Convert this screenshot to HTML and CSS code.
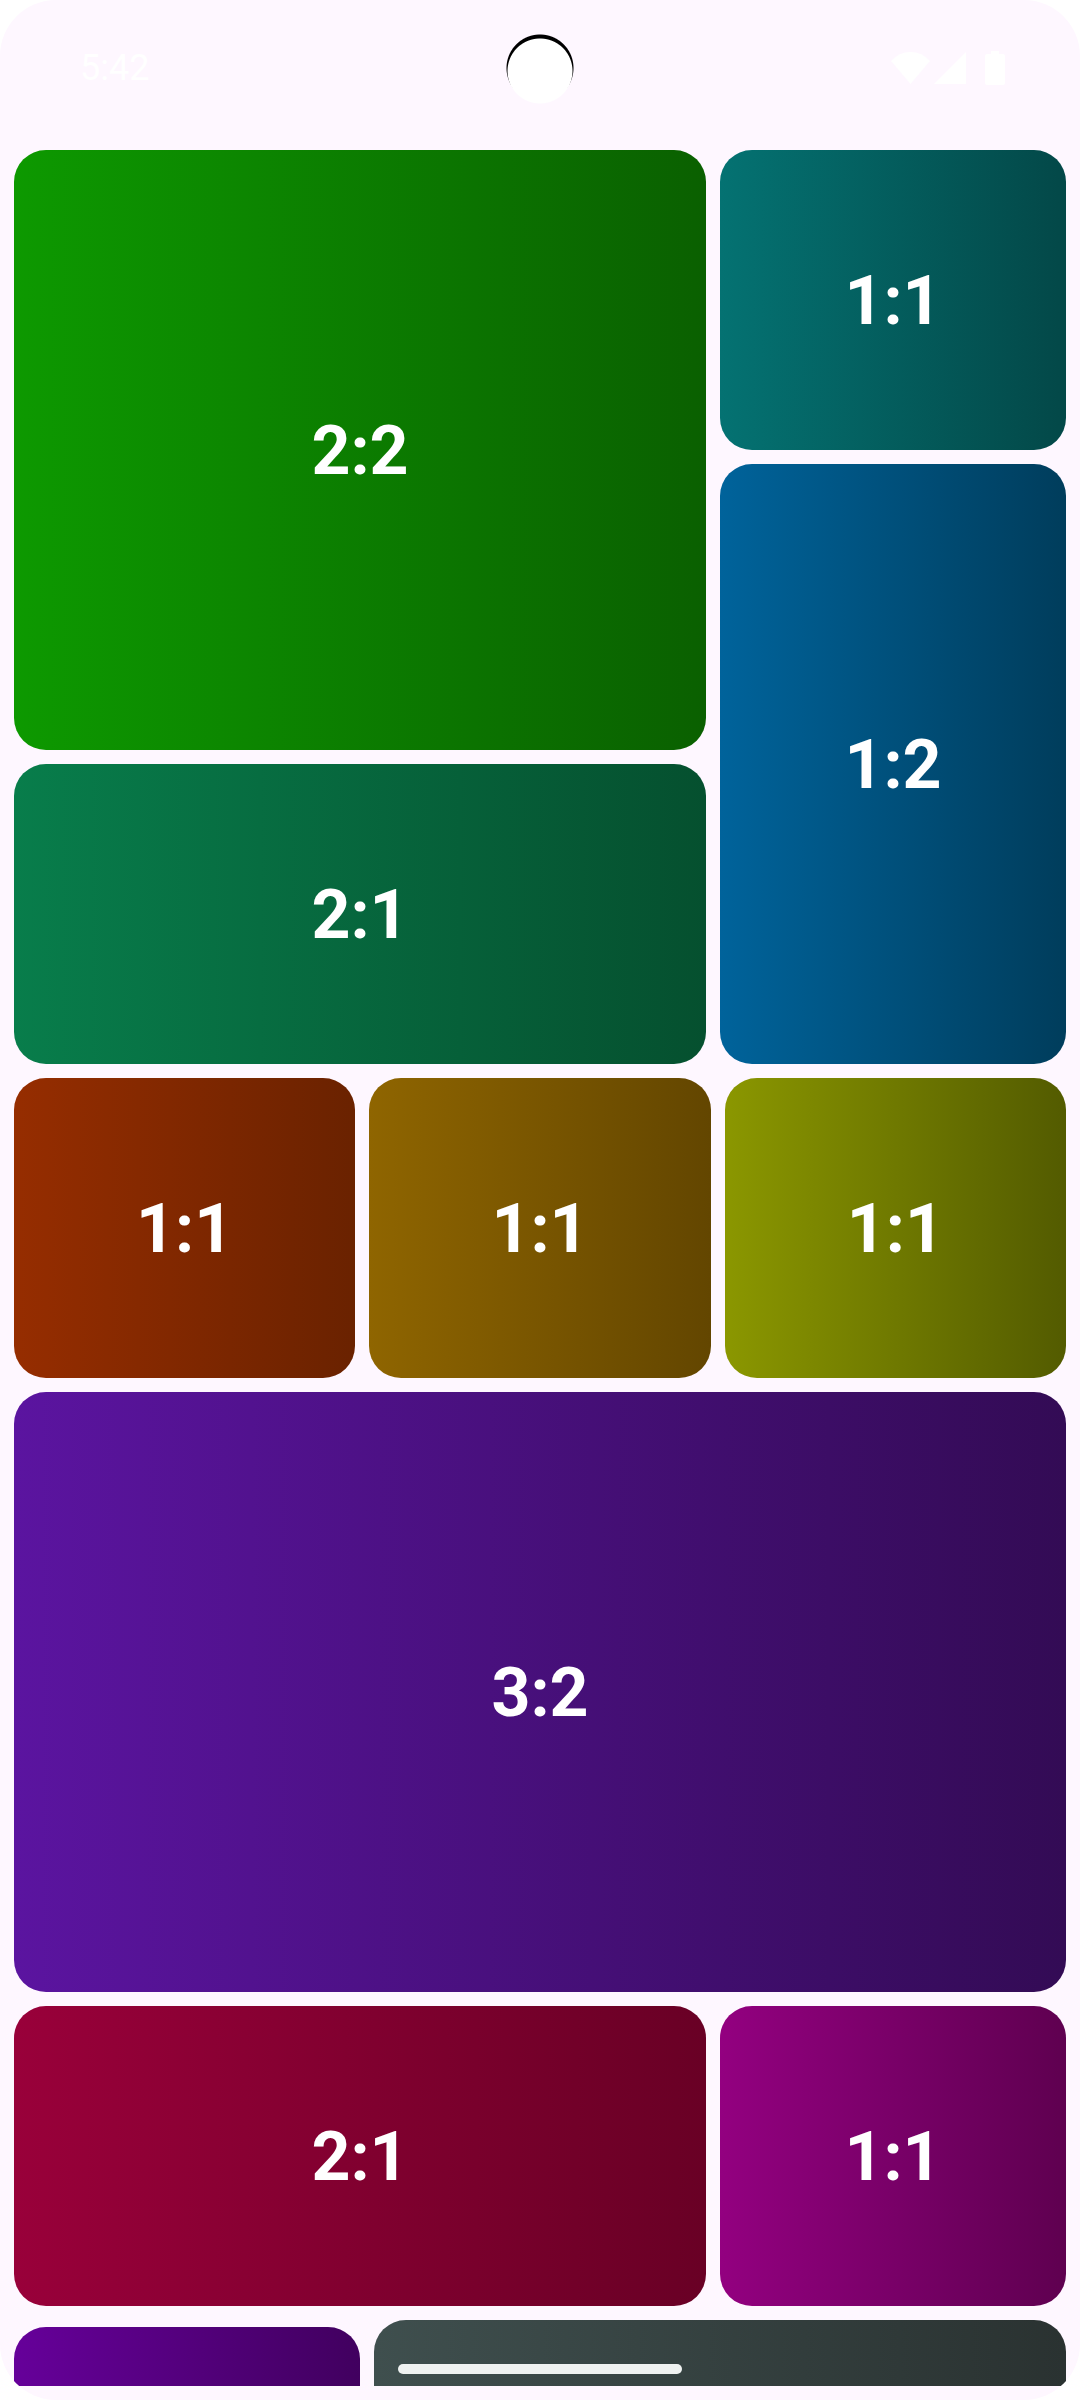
FILE: index.html
```html
<!DOCTYPE html>
<html lang="en">
<head>
<meta charset="utf-8">
<meta name="viewport" content="width=device-width, initial-scale=1">
<title>Weighted grid</title>
<link rel="stylesheet" href="styles.css">
</head>
<body>
<div class="screen">
  <header class="status">
    <time class="clock">5:42</time>
    <div class="camera"></div>
    <div class="indicators">
      <svg class="wifi" viewBox="0 0 39 32" aria-hidden="true"><path d="M0 9Q8 0 19.500 0T39 9L19.500 32Z"/></svg>
      <svg class="signal" viewBox="0 0 32 32" aria-hidden="true"><path d="M32 0V32H0Z"/></svg>
      <svg class="battery" viewBox="0 0 20 34" aria-hidden="true"><path d="M6 0H14V3H18Q20 3 20 5V32Q20 34 18 34H2Q0 34 0 32V5Q0 3 2 3H6Z"/></svg>
    </div>
  </header>
  <main class="board">
    <section class="row wide-left">
      <div class="stack">
        <div class="tile tall green">2:2</div>
        <div class="tile emerald">2:1</div>
      </div>
      <div class="stack">
        <div class="tile teal">1:1</div>
        <div class="tile tall blue">1:2</div>
      </div>
    </section>
    <section class="row thirds">
      <div class="tile rust">1:1</div>
      <div class="tile amber">1:1</div>
      <div class="tile olive">1:1</div>
    </section>
    <section class="row">
      <div class="tile tall indigo">3:2</div>
    </section>
    <section class="row wide-left">
      <div class="tile crimson">2:1</div>
      <div class="tile magenta">1:1</div>
    </section>
    <section class="row wide-right">
      <div class="tile short violet"></div>
      <div class="tile slate"></div>
    </section>
  </main>
  <div class="home-bar"></div>
</div>
</body>
</html>
```
FILE: styles.css
```css
* {
  box-sizing: border-box;
}

body {
  margin: 0;
  background: #fff;
  font-family: Roboto, sans-serif;
  color: #fff;
}

.screen {
  position: relative;
  display: flex;
  flex-direction: column;
  height: 100vh;
  padding: 0 14px 14px;
  overflow: hidden;
  border-radius: 56px;
  background: #fef7ff;
}

/* Status bar */
.status {
  display: grid;
  grid-template-columns: 1fr auto 1fr;
  align-items: center;
  flex: none;
  height: 136px;
  padding: 0 61px;
}

.clock {
  padding-left: 5px;
  font-size: 36px;
  line-height: 44px;
}

/* Black lens cut-out with a white disc sitting slightly lower */
.camera {
  width: 68px;
  height: 72px;
  background:
    radial-gradient(circle at 34px 39px, #fff 32px, transparent 33px),
    radial-gradient(circle at 34px 36px, #000 33px, transparent 34px);
}

.indicators {
  display: flex;
  justify-content: flex-end;
  align-items: center;
  fill: #fff;
}

.wifi {
  width: 39px;
  height: 32px;
  margin-right: 4px;
}

.signal {
  width: 32px;
  height: 32px;
  margin-right: 19px;
}

.battery {
  width: 20px;
  height: 34px;
}

/* Tiles */
.board {
  display: flex;
  flex-direction: column;
  flex: 1;
  gap: 14px;
  min-height: 0;
  padding-top: 14px;
  overflow: hidden;
}

.row {
  display: grid;
  flex: none;
  align-items: center;
  gap: 14px;
}

.wide-left {
  grid-template-columns: 2fr 1fr;
}

.wide-right {
  grid-template-columns: 1fr 2fr;
}

.thirds {
  grid-template-columns: repeat(3, 1fr);
}

.stack {
  display: flex;
  flex-direction: column;
  gap: 14px;
}

.tile {
  display: flex;
  justify-content: center;
  align-items: center;
  height: 300px;
  padding-top: 2px;
  border-radius: 32px;
  background: linear-gradient(90deg, var(--from), var(--to));
  font-size: 68px;
  font-weight: 700;
  line-height: 80px;
}

.tall {
  height: 600px;
}

.short {
  height: 286px;
}

.green { --from: #0d9900; --to: #0a6000; }
.emerald { --from: #087d4b; --to: #05502f; }
.teal { --from: #047272; --to: #034848; }
.blue { --from: #00639b; --to: #003d5c; }
.rust { --from: #962d00; --to: #6a2200; }
.amber { --from: #8f6500; --to: #634600; }
.olive { --from: #8b9700; --to: #535b00; }
.indigo { --from: #5b14a0; --to: #330b55; }
.crimson { --from: #99003a; --to: #690025; }
.magenta { --from: #930080; --to: #5f0050; }
.violet { --from: #66009a; --to: #41005f; }
.slate { --from: #3f4f4e; --to: #2a3231; }

/* Gesture handle floats over the tiles */
.home-bar {
  position: absolute;
  bottom: 26px;
  left: 50%;
  width: 284px;
  height: 10px;
  margin-left: -142px;
  border-radius: 5px;
  background: #eff2f1;
}
```
